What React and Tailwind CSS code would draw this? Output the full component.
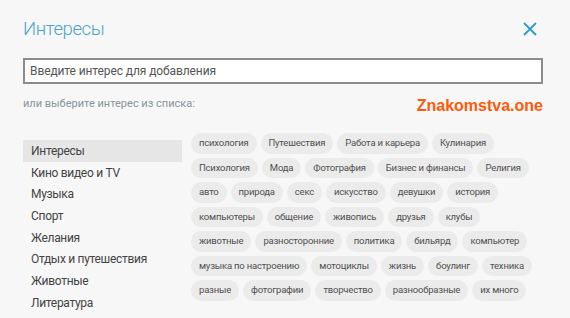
import React from "react";

const categories = [
  "Интересы",
  "Кино видео и TV",
  "Музыка",
  "Спорт",
  "Желания",
  "Отдых и путешествия",
  "Животные",
  "Литература",
];

const tagRows = [
  ["психология", "Путешествия", "Работа и карьера", "Кулинария"],
  ["Психология", "Мода", "Фотография", "Бизнес и финансы", "Религия"],
  ["авто", "природа", "секс", "искусство", "девушки", "история"],
  ["компьютеры", "общение", "живопись", "друзья", "клубы"],
  ["животные", "разносторонние", "политика", "бильярд", "компьютер"],
  ["музыка по настроению", "мотоциклы", "жизнь", "боулинг", "техника"],
  ["разные", "фотографии", "творчество", "разнообразные", "их много"],
];

export default function App() {
  return (
    <div className="w-[570px] h-[318px] overflow-hidden bg-[#f7f7f7] pl-[23px] pr-[27px] font-['Roboto',sans-serif]">
      <div className="flex items-center justify-between pt-[13px] h-[45px]">
        <h1 className="text-[18.5px] font-light tracking-[-0.4px] text-[#4aa3c8] leading-[28px]">Интересы</h1>
        <svg width="16" height="16" viewBox="0 0 16 16" className="mr-[5px]">
          <path d="M2 2 L14 14 M14 2 L2 14" stroke="#2a9ccc" strokeWidth="1.8" />
        </svg>
      </div>

      <div className="mt-[13px] h-[26px] border-2 border-[#8c8c8c] bg-white flex items-center pl-[5px]">
        <span className="text-[12px] tracking-[-0.1px] text-[#555] leading-none">Введите интерес для добавления</span>
      </div>

      <div className="flex items-center justify-between mt-[11px] h-[18px]">
        <span className="text-[11px] text-[#8a9499]">или выберите интерес из списка:</span>
        <span className="text-[16px] font-bold text-[#ff5a0a] font-['Liberation_Sans',sans-serif] mt-[4px]">Znakomstva.one</span>
      </div>

      <div className="flex mt-[20px]">
        <ul className="w-[159px] shrink-0 mt-[7px]">
          {categories.map((c, i) => (
            <li
              key={c}
              className={
                "h-[21.7px] flex items-center pl-[8px] text-[12px] tracking-[-0.3px] text-[#444] whitespace-nowrap " +
                (i === 0 ? "bg-[#e6e6e6]" : "")
              }
            >
              {c}
            </li>
          ))}
        </ul>

        <div className="ml-[9px] flex flex-col gap-[4px]">
          {tagRows.map((row, r) => (
            <div key={r} className="flex gap-[4px]">
              {row.map((t) => (
                <span
                  key={t}
                  className="h-[20.5px] px-[8px] rounded-full bg-[#ebebeb] text-[9.5px] tracking-[-0.2px] text-[#505050] flex items-center whitespace-nowrap"
                >
                  {t}
                </span>
              ))}
            </div>
          ))}
        </div>
      </div>
    </div>
  );
}
